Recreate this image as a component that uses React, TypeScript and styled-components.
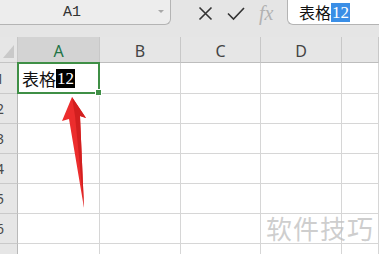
import React from "react"
import styled, { createGlobalStyle } from "styled-components"

const GlobalStyle = createGlobalStyle`
  html, body {
    margin: 0;
    padding: 0;
    background: #ffffff;
    overflow: hidden;
  }
  body {
    font-family: "Noto Sans", "Noto Sans CJK SC", sans-serif;
  }
`

const Screen = styled.div`
  position: relative;
  width: 379px;
  height: 254px;
  overflow: hidden;
  background: #ffffff;
`

const TopBar = styled.div`
  display: flex;
  align-items: flex-start;
  height: 37px;
  background: #e5e5e5;
`

const NameBox = styled.div`
  position: relative;
  width: 171px;
  height: 25px;
  box-sizing: border-box;
  display: flex;
  align-items: center;
  padding-left: 63px;
  background: #ededed;
  border-right: 1px solid #b4b4b4;
  border-bottom: 1px solid #b4b4b4;
  border-bottom-right-radius: 6px;
  font-family: "Liberation Mono", monospace;
  font-size: 15px;
  color: #333333;
`

const Caret = styled.span`
  position: absolute;
  right: 6px;
  top: 10px;
  width: 0;
  height: 0;
  border-left: 3px solid transparent;
  border-right: 3px solid transparent;
  border-top: 3px solid #a8a8a8;
`

const Tools = styled.div`
  display: flex;
  align-items: center;
  height: 27px;
  padding-left: 27px;
  gap: 14px;
`

const Fx = styled.span`
  font-family: "Liberation Serif", serif;
  font-style: italic;
  font-size: 20px;
  color: #b2b2b2;
  width: 22px;
`

const FormulaBox = styled.div`
  flex: 1;
  height: 25px;
  box-sizing: border-box;
  margin-left: 6px;
  display: flex;
  align-items: center;
  padding-left: 11px;
  background: #ffffff;
  border-left: 1px solid #b4b4b4;
  border-bottom: 1px solid #b4b4b4;
  border-bottom-left-radius: 6px;
  font-size: 16px;
  color: #111111;
`

const Digits = styled.span<{ $bg: string }>`
  background: ${(p) => p.$bg};
  color: #ffffff;
  font-family: "Liberation Serif", serif;
  font-size: 17px;
  line-height: 19px;
  padding: 0 1px;
`

const Sheet = styled.div`
  display: grid;
  grid-template-columns: 18px 82px 81px 80px 81px 1fr;
  grid-template-rows: 26px 31px repeat(6, 30px);
`

const Corner = styled.div`
  position: relative;
  background: #e6e6e6;
  border-right: 1px solid #c8c8c8;
  border-bottom: 1px solid #c4c4c4;
  &::after {
    content: "";
    position: absolute;
    right: 3px;
    bottom: 4px;
    width: 0;
    height: 0;
    border-left: 11px solid transparent;
    border-bottom: 13px solid #c9c9c9;
  }
`

const ColHead = styled.div<{ $active?: boolean }>`
  display: flex;
  align-items: center;
  justify-content: center;
  background: ${(p) => (p.$active ? "#d3d3d3" : "#e6e6e6")};
  color: ${(p) => (p.$active ? "#217346" : "#444444")};
  border-right: 1px solid #c8c8c8;
  border-bottom: 1px solid #bdbdbd;
  font-family: "Noto Sans", sans-serif;
  font-size: 16px;
  padding-top: 2px;
`

const RowHead = styled.div`
  display: flex;
  align-items: center;
  justify-content: flex-end;
  padding-right: 13px;
  overflow: hidden;
  background: #e6e6e6;
  border-right: 1px solid #b9b9b9;
  border-bottom: 1px solid #c9c9c9;
  color: #4a4a4a;
  font-size: 14px;
`

const Cell = styled.div<{ $active?: boolean }>`
  position: relative;
  display: flex;
  align-items: center;
  padding-left: 4px;
  border-right: 1px solid #d6d6d6;
  border-bottom: 1px solid #d6d6d6;
  font-size: 17px;
  color: #111111;
  ${(p) =>
    p.$active &&
    `
    &::after {
      content: "";
      position: absolute;
      left: -1px;
      top: -1px;
      right: -1px;
      bottom: -1px;
      border: 2px solid #3f8f46;
    }
    &::before {
      content: "";
      position: absolute;
      right: -3px;
      bottom: -3px;
      width: 5px;
      height: 5px;
      background: #3f8f46;
      border: 1px solid #ffffff;
      z-index: 2;
    }
  `}
`

const Arrow = styled.svg`
  position: absolute;
  left: 0;
  top: 0;
  pointer-events: none;
`

const Watermark = styled.div`
  position: absolute;
  right: 5px;
  bottom: 8px;
  font-family: "Noto Sans CJK SC", sans-serif;
  font-size: 26px;
  letter-spacing: 1px;
  color: rgba(190, 190, 190, 0.75);
`

const columns = ["A", "B", "C", "D", ""]
const rows = [1, 2, 3, 4, 5, 6, 7]

export default function App() {
  return (
    <Screen>
      <GlobalStyle />
      <TopBar>
        <NameBox>
          A1
          <Caret />
        </NameBox>
        <Tools>
          <svg width="15" height="15" viewBox="0 0 15 15">
            <path d="M1.5 1.5 L13.5 13.5 M13.5 1.5 L1.5 13.5" stroke="#333" strokeWidth="1.6" fill="none" />
          </svg>
          <svg width="18" height="15" viewBox="0 0 18 15">
            <path d="M1 7.5 L6.5 13 L17 2" stroke="#333" strokeWidth="1.6" fill="none" />
          </svg>
          <Fx>fx</Fx>
        </Tools>
        <FormulaBox>
          表格<Digits $bg="#3a8ee6">12</Digits>
        </FormulaBox>
      </TopBar>
      <Sheet>
        <Corner />
        {columns.map((c, i) => (
          <ColHead key={"h" + i} $active={c === "A"}>
            {c}
          </ColHead>
        ))}
        {rows.map((r) => (
          <React.Fragment key={r}>
            <RowHead>{r}</RowHead>
            {columns.map((c, i) =>
              r === 1 && c === "A" ? (
                <Cell key={i} $active>
                  表格<Digits $bg="#000000">12</Digits>
                </Cell>
              ) : (
                <Cell key={i} />
              )
            )}
          </React.Fragment>
        ))}
      </Sheet>
      <Arrow width="379" height="254" viewBox="0 0 379 254">
        <polygon points="72,97 86,118 80,116 84,208 69,119 62,121" fill="#ec2d2d" />
        <polygon points="72,97 75,116 84,208 80,116 86,118" fill="#d21f1f" />
      </Arrow>
      <Watermark>软件技巧</Watermark>
    </Screen>
  )
}
